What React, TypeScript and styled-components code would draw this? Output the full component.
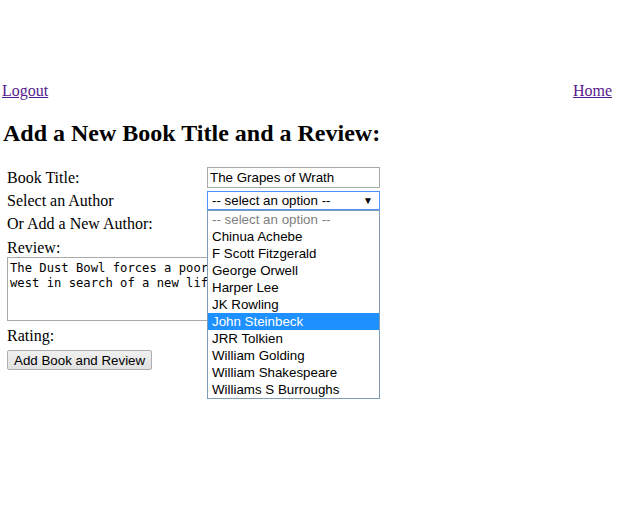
import styled, { createGlobalStyle } from "styled-components";

const authors = [
	"Chinua Achebe",
	"F Scott Fitzgerald",
	"George Orwell",
	"Harper Lee",
	"JK Rowling",
	"John Steinbeck",
	"JRR Tolkien",
	"William Golding",
	"William Shakespeare",
	"Williams S Burroughs",
];

const App = () => {
	return (
		<Page>
			<GlobalStyle />
			<Nav>
				<NavLink href="#">Logout</NavLink>
				<NavLink href="#">Home</NavLink>
			</Nav>
			<Heading>Add a New Book Title and a Review:</Heading>
			<Form onSubmit={(e) => e.preventDefault()}>
				<Fields>
					<Label>Book Title:</Label>
					<TextInput defaultValue="The Grapes of Wrath" />
					<Label>Select an Author</Label>
					<SelectWrap>
						<SelectBox>
							<span>-- select an option --</span>
							<Arrow>▼</Arrow>
						</SelectBox>
						<Dropdown>
							<Option $muted>-- select an option --</Option>
							{authors.map((a) => (
								<Option key={a} $active={a === "John Steinbeck"}>
									{a}
								</Option>
							))}
						</Dropdown>
					</SelectWrap>
					<Label>Or Add a New Author:</Label>
					<TextInput />
				</Fields>
				<Label>Review:</Label>
				<ReviewBox
					defaultValue={
						"The Dust Bowl forces a poor family of\nwest in search of a new life in California."
					}
				/>
				<Label>Rating:</Label>
				<Submit type="submit">Add Book and Review</Submit>
			</Form>
		</Page>
	);
};

export default App;

const GlobalStyle = createGlobalStyle`
	body {
		margin: 0;
		background: #ffffff;
		font-family: "Liberation Serif", "Times New Roman", serif;
		font-size: 16px;
		color: #000000;
	}
`;

const Page = styled.div`
	width: 621px;
	height: 510px;
	padding-top: 82px;
	box-sizing: border-box;
	overflow: hidden;
`;

const Nav = styled.div`
	display: flex;
	justify-content: space-between;
	padding: 0 9px 0 2px;
	line-height: 18px;
`;

const NavLink = styled.a`
	color: #551a8b;
	text-decoration: underline;
`;

const Heading = styled.h2`
	font-size: 24px;
	font-weight: bold;
	line-height: 28px;
	margin: 19px 0 20px 3px;
`;

const Form = styled.form`
	display: flex;
	flex-direction: column;
	align-items: flex-start;
	padding-left: 7px;
`;

const Fields = styled.div`
	display: grid;
	grid-template-columns: 200px 173px;
	row-gap: 3px;
	align-items: center;
	margin-bottom: 5px;
`;

const Label = styled.div`
	line-height: 18px;
`;

const TextInput = styled.input`
	box-sizing: border-box;
	width: 173px;
	height: 21px;
	border: 1px solid #a9a9a9;
	padding: 1px 2px;
	font-family: "Liberation Sans", Arial, sans-serif;
	font-size: 13.33px;
	color: #000;
	outline: none;
`;

const SelectWrap = styled.div`
	position: relative;
	width: 173px;
	height: 19px;
`;

const SelectBox = styled.div`
	box-sizing: border-box;
	height: 19px;
	border: 1px solid #4d90fe;
	display: flex;
	align-items: center;
	justify-content: space-between;
	padding: 0 6px 0 4px;
	font-family: "Liberation Sans", Arial, sans-serif;
	font-size: 13.33px;
	background: #fff;
`;

const Arrow = styled.span`
	font-size: 10px;
`;

const Dropdown = styled.div`
	position: absolute;
	top: 19px;
	left: 0;
	width: 173px;
	box-sizing: border-box;
	border: 1px solid #7f9db9;
	background: #fff;
	z-index: 2;
`;

const Option = styled.div<{ $muted?: boolean; $active?: boolean }>`
	height: 17px;
	line-height: 17px;
	padding-left: 4px;
	font-family: "Liberation Sans", Arial, sans-serif;
	font-size: 13.33px;
	white-space: nowrap;
	color: ${(p) => (p.$active ? "#ffffff" : p.$muted ? "#808080" : "#000000")};
	background: ${(p) => (p.$active ? "#1e90ff" : "transparent")};
`;

const ReviewBox = styled.textarea`
	box-sizing: border-box;
	width: 340px;
	height: 64px;
	border: 1px solid #a9a9a9;
	padding: 3px 2px 2px;
	margin: 0 0 6px;
	font-family: "DejaVu Sans Mono", monospace;
	font-size: 12.2px;
	line-height: 15px;
	resize: none;
	outline: none;
	overflow: hidden;
	white-space: pre;
`;

const Submit = styled.button`
	margin-top: 5px;
	height: 20px;
	padding: 0 6px;
	border: 1px solid #adadad;
	border-radius: 2px;
	background: linear-gradient(#f0f0f0, #e1e1e1);
	font-family: "Liberation Sans", Arial, sans-serif;
	font-size: 13.33px;
	color: #000;
`;
